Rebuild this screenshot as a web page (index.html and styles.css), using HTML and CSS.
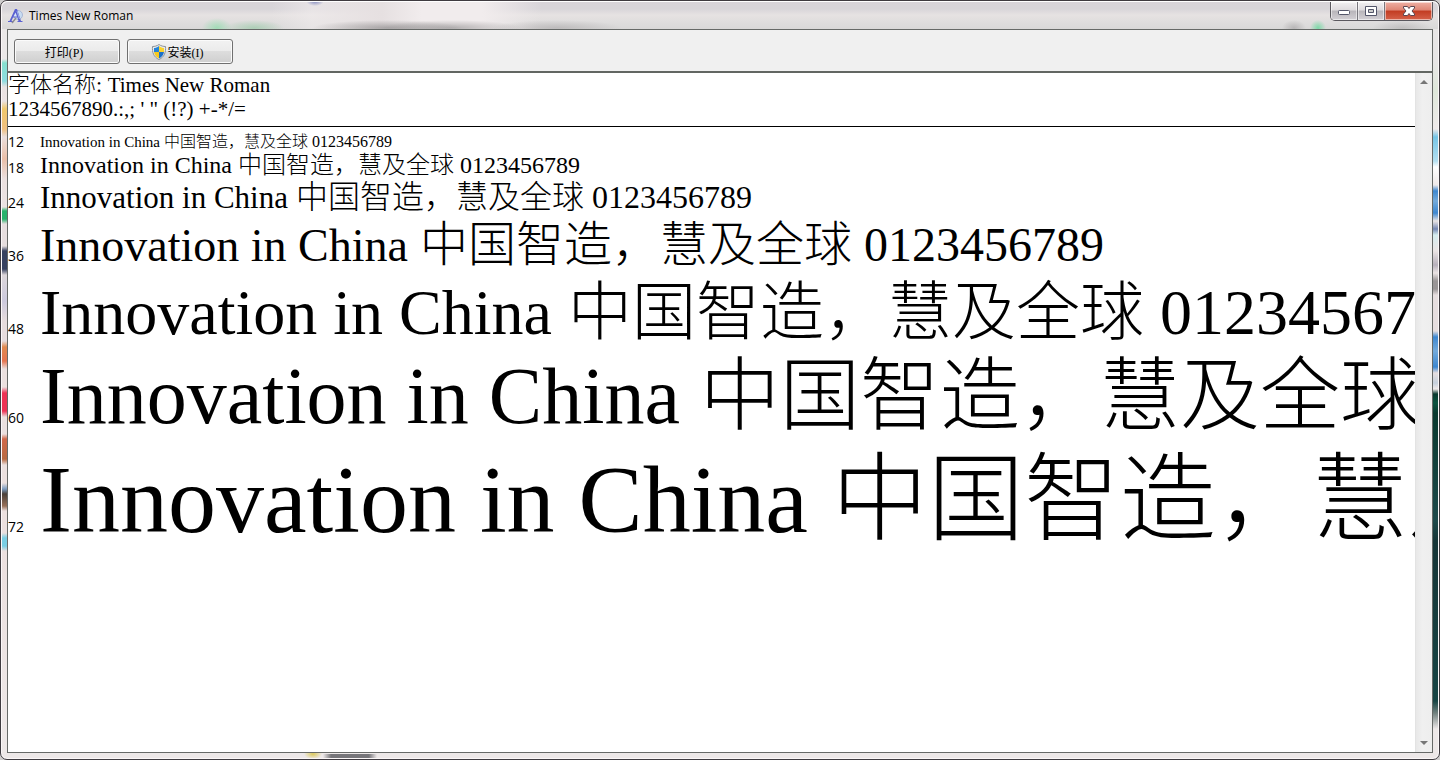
FILE: index.html
```html
<!DOCTYPE html>
<html lang="zh-CN">
<head>
  <meta charset="UTF-8">
  <title>Times New Roman</title>
  <link rel="stylesheet" href="styles.css">
</head>
<body>
  <div class="window">
    <header class="titlebar">
      <svg class="app-icon" width="16" height="16" viewBox="0 0 16 16">
        <circle cx="10" cy="7" r="4.500" fill="#c9dcf2" stroke="#a9b7d6"/>
        <path d="M7 1h2l4 12h1.500v1H9.500v-1h1L9.500 9.500H5L3.500 13H5v1H0v-1h1.500z" fill="#5a60d0"/>
        <path d="M7.500 4.500 5.500 8.500h3.500z" fill="#d8e6f7"/>
        <path d="M8 10l-4 5" stroke="#8a8a92" stroke-width="1.500"/>
        <path d="M9 3l2.500 8" stroke="#9fb0e6"/>
      </svg>
      <h1>Times New Roman</h1>
      <div class="controls">
        <button class="min" aria-label="最小化">
          <svg width="14" height="12" viewBox="0 0 14 12"><rect x="1.500" y="5.500" width="11" height="4" rx="1" fill="#fff" stroke="#54566a"/></svg>
        </button>
        <button class="max" aria-label="最大化">
          <svg width="12" height="12" viewBox="0 0 12 12"><path d="M.5 1.500h11v9H.5z" fill="#fff" stroke="#54566a"/><path d="M3.500 4.500h5v3h-5z" fill="#ccc" stroke="#54566a"/></svg>
        </button>
        <button class="close" aria-label="关闭">
          <svg width="14" height="12" viewBox="0 0 14 12"><path d="M1.500 1.500h4L7 3.500l1.500-2h4V3L10 6l2.500 3v1.500h-4L7 8.500l-1.500 2h-4V9L4 6 1.500 3z" fill="#fff" stroke="#5c4650"/></svg>
        </button>
      </div>
    </header>

    <div class="client">
      <div class="toolbar">
        <button>打印(P)</button>
        <button>
          <svg width="16" height="16" viewBox="0 0 16 16">
            <path d="M8 .5C6 2 3.500 2.500 1.500 2.500 1 8 2.500 13 8 15.500 13.500 13 15 8 14.500 2.500 12.500 2.500 10 2 8 .5z" fill="#e8eaec" stroke="#8d9298"/>
            <path d="M8 2C6 3.500 4.500 4 3 4v4h5z" fill="#2484d8"/>
            <path d="M8 2C10 3.500 11.500 4 13 4v4H8z" fill="#fbd32c"/>
            <path d="M3 8h5v6.500C5 13 3.500 11 3 8z" fill="#f6c91f"/>
            <path d="M13 8H8v6.500c3-1.500 4.500-3.500 5-6.500z" fill="#1b6fc8"/>
          </svg>安装(I)
        </button>
      </div>

      <main class="preview">
        <div class="page">
          <div class="info">
            <p><span class="label">字体名称: </span>Times New Roman</p>
            <p>1234567890.:,; ' " (!?) +-*/=</p>
          </div>
          <ul class="samples">
            <li class="s12"><span class="pt">12</span><span><span class="latin">Innovation in China</span> 中国智造，慧及全球 0123456789</span></li>
            <li class="s18"><span class="pt">18</span><span><span class="latin">Innovation in China</span> 中国智造，慧及全球 0123456789</span></li>
            <li class="s24"><span class="pt">24</span><span><span class="latin">Innovation in China</span> 中国智造，慧及全球 0123456789</span></li>
            <li class="s36"><span class="pt">36</span><span><span class="latin">Innovation in China</span> 中国智造，慧及全球 0123456789</span></li>
            <li class="s48"><span class="pt">48</span><span><span class="latin">Innovation in China</span> 中国智造，慧及全球 0123456789</span></li>
            <li class="s60"><span class="pt">60</span><span><span class="latin">Innovation in China</span> 中国智造，慧及全球 0123456789</span></li>
            <li class="s72"><span class="pt">72</span><span><span class="latin">Innovation in China</span> 中国智造，慧及全球 0123456789</span></li>
          </ul>
        </div>
        <div class="scrollbar">
          <svg width="8" height="4" viewBox="0 0 8 4"><path d="M0 4l4-4 4 4z" fill="#777"/></svg>
          <svg width="8" height="4" viewBox="0 0 8 4"><path d="M0 0l4 4 4-4z" fill="#777"/></svg>
        </div>
      </main>
    </div>
  </div>
</body>
</html>
```

FILE: styles.css
```css
* {
  box-sizing: border-box;
}

body {
  margin: 0;
  background: #cfcdcd;
  color: #000;
  font-family: "Open Sans", "Noto Sans CJK SC", sans-serif;
  font-size: 12px;
}

h1, p, ul {
  margin: 0;
  padding: 0;
}

/* glass frame, with the desktop showing through the edges */
.window {
  display: flex;
  flex-direction: column;
  height: 100vh;
  padding: 0 6px 6px;
  border: 1px solid #3f3b40;
  border-radius: 7px;
  box-shadow: inset 0 0 0 1px #fbf7f8;
  background:
    linear-gradient(#fbf7f8, #fbf7f8) 0 0 / 1px 100% no-repeat,
    linear-gradient(#fbf7f8, #fbf7f8) 100% 0 / 1px 100% no-repeat,
    linear-gradient(#fbf7f8, #fbf7f8) 0 100% / 100% 1px no-repeat,
    radial-gradient(closest-side, #dcc95c, transparent) 303px 100% / 18px 10px no-repeat,
    linear-gradient(90deg, transparent, #77767a 15%, #77767a 85%, transparent) 322px 100% / 54px 5px no-repeat,
    linear-gradient(#ebe8e8 58px, #86e0cf 62px, #8fdce0 80px, #e9e2e2 86px, #ebe3e3 100px, #f0c86c 108px, #f0c080 128px, #eadfdd 136px, #eabfa8 158px, #ebe0df 178px, #ebe3e3 206px, #28b26c 210px, #28b26c 218px, #e6dedf 223px, #e6dedf 245px, #37415f 250px, #37415f 268px, #dcd6da 274px, #ccc9dd 300px, #e6dcdd 320px, #e6dcdd 340px, #e08a50 346px, #e67550 360px, #ebe0df 368px, #ebe0df 386px, #ed3355 392px, #ed3355 410px, #ebe0df 416px, #ebe0df 433px, #d0684a 438px, #b86a42 458px, #ebe0df 464px, #ebe0df 482px, #7c9cc0 488px, #4a4039 493px, #977059 505px, #ebe0df 510px, #ebe0df 532px, #7acfe4 537px, #7acfe4 545px, #ebe0df 550px, #ede8e8) 0 0 / 6px 100% no-repeat,
    linear-gradient(#e8e6e6 60px, #dfe8da 90px, #efeaea 128px, #75c5e6 136px, #b4dff0 160px, #fff 166px, #efe9e9 184px, #3d87d0 190px, #74aada 200px, #3d87d0 212px, #e9e4e4 220px, #7587b2 228px, #d5edef 234px, #ebe4e4 250px, #b7b0bb 264px, #ebe4e4 272px, #999596 280px, #999596 288px, #e6dedf 294px, #e6dedf 330px, #3d87d0 336px, #74aada 350px, #3d87d0 366px, #e6dedf 372px, #c5d0dc 382px, #efe9e9 388px, #09392f 393px, #0b5440 402px, #09392f 412px, #1d494a 520px, #163537 540px, #174444 700px, #70807e 712px, #ede8e8 728px) 100% 0 / 6px 100% no-repeat,
    #ede8e8;
}

.titlebar {
  display: flex;
  flex: none;
  align-items: flex-start;
  height: 28px;
  margin: 0 -5px;
  padding-left: 6px;
  border-top: 1px solid #fff;
  border-radius: 6px 6px 0 0;
  background:
    radial-gradient(closest-side, #93dcaecc, transparent) 200px 16px / 30px 20px no-repeat,
    radial-gradient(closest-side, #8fc9a099, transparent) 222px 18px / 60px 16px no-repeat,
    radial-gradient(closest-side, #7f86bc, transparent) 304px -6px / 18px 10px no-repeat,
    radial-gradient(closest-side, #7f7d7e99, transparent) 310px 18px / 150px 16px no-repeat,
    radial-gradient(closest-side, #7f7d7e88, transparent) 380px 18px / 140px 16px no-repeat,
    radial-gradient(closest-side, #a5a2a388, transparent) 490px 18px / 130px 16px no-repeat,
    radial-gradient(closest-side, #9a989988, transparent) 1280px 18px / 24px 16px no-repeat,
    radial-gradient(closest-side, #7ddaa8, transparent) 1308px 18px / 16px 16px no-repeat,
    radial-gradient(closest-side, #9a989966, transparent) 1370px 18px / 60px 16px no-repeat,
    linear-gradient(90deg, #f1eced00 270px, #f1eced99 310px, #e6e0e1 380px, #f1eced 420px, #f1eced 480px, #f1eced00 540px),
    linear-gradient(#d8d4d9, #d8d5d9 7px, #e6e2e2 13px, #dddcdc 22px, #d9d8d8);
}

.app-icon {
  flex: none;
  margin: 6px 5px 0 0;
}

h1 {
  flex: 1;
  margin-top: 5px;
  font-size: 12px;
  font-weight: normal;
  line-height: 18px;
}

.controls {
  display: flex;
  flex: none;
  height: 19px;
  margin-right: 5px;
  border: 1px solid #5a585e;
  border-top: 0;
  border-radius: 0 0 5px 5px;
  overflow: hidden;
}

.controls button {
  display: flex;
  align-items: center;
  justify-content: center;
  width: 27px;
  padding: 0;
  border: 0;
  border-right: 1px solid #77757c;
  background: linear-gradient(#f2f0f2, #dddadd 45%, #b8b5ba 50%, #d3d0d5);
  box-shadow: inset 0 0 0 1px #ffffff88;
}

.controls .close {
  width: 47px;
  border-right: 0;
  background: linear-gradient(#eeb0a4, #de8574 45%, #c23c22 50%, #d5624a);
}

.client {
  display: flex;
  flex: 1;
  flex-direction: column;
  min-height: 0;
  border: 1px solid #666967;
}

.toolbar {
  display: flex;
  flex: none;
  gap: 7px;
  height: 43px;
  padding: 9px 6px;
  border-bottom: 2px solid #626662;
  background: #f0f0f0;
}

.toolbar button {
  display: flex;
  align-items: center;
  justify-content: center;
  width: 106px;
  height: 25px;
  padding: 0 6px 0 0;
  border: 1px solid #707070;
  border-radius: 3px;
  background: linear-gradient(#f2f2f2, #ebebeb 49%, #dddddd 50%, #cfcfcf);
  box-shadow: inset 0 0 0 1px #fbfbfb;
  color: #000;
  font-family: "Liberation Serif", "Noto Sans CJK SC", serif;
  font-size: 12px;
}

.toolbar svg {
  margin-right: 1px;
}

.preview {
  display: flex;
  flex: 1;
  min-height: 0;
  background: #fff;
}

.page {
  flex: 1;
  min-width: 0;
  overflow: hidden;
  font-family: "Liberation Serif", "Noto Sans CJK SC Light", "Noto Sans CJK SC", serif;
  font-weight: 300;
  white-space: nowrap;
}

.info {
  height: 54px;
  border-bottom: 1px solid #000;
  font-size: 21px;
  line-height: 24px;
}

.info .label {
  font-size: 22px;
}

.samples {
  padding-top: 6px;
  list-style: none;
}

.samples li {
  display: flex;
  align-items: baseline;
}

.pt {
  flex: none;
  width: 32px;
  font-family: "Open Sans", sans-serif;
  font-size: 14px;
  font-weight: 400;
  line-height: 16px;
}

.s12 { font-size: 16px; line-height: 18px; }
.s18 { font-size: 24px; line-height: 28px; }
.s24 { font-size: 32px; line-height: 36px; }
.s36 { font-size: 48px; line-height: 58px; }
.s48 { font-size: 64px; line-height: 76px; }
.s60 { font-size: 80px; line-height: 90px; }
.s72 { font-size: 96px; line-height: 118px; }

/* the latin words run a little narrower at these sizes */
.s12 .latin { font-size: 15px; }
.s24 .latin { font-size: 31px; }
.s36 .latin { font-size: 46px; }

.scrollbar {
  display: flex;
  flex: none;
  flex-direction: column;
  align-items: center;
  justify-content: space-between;
  width: 17px;
  padding: 7px 0;
  border-left: 1px solid #e3e3e3;
  background: linear-gradient(90deg, #e8e8e8, #f0f0f0 40%, #eeeeee);
}
```
